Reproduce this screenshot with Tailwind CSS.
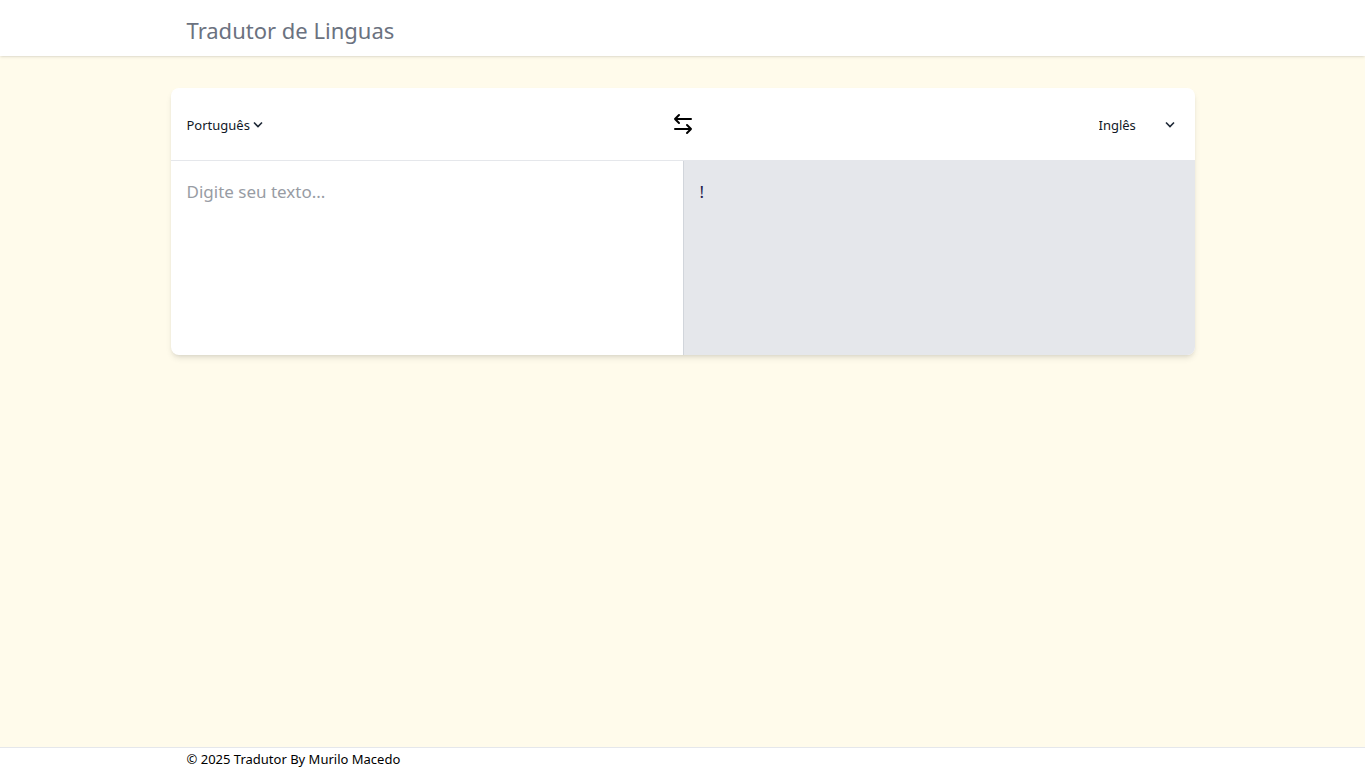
<!DOCTYPE html>
<html lang="pt-BR">
<head>
<meta charset="utf-8">
<meta name="viewport" content="width=device-width, initial-scale=1">
<title>Tradutor de Linguas</title>
<script src="https://cdn.jsdelivr.net/npm/@tailwindcss/browser@4"></script>
</head>
<body class="flex min-h-screen flex-col bg-[#fffbeb] font-['Noto_Sans',sans-serif] text-black">
<header class="bg-white shadow-sm">
  <div class="mx-auto flex h-14 w-full max-w-5xl items-center px-4 pt-1">
    <h1 class="text-[22px] leading-8 text-[#6b7280]">Tradutor de Linguas</h1>
  </div>
</header>
<main class="flex grow items-start py-8">
  <div class="mx-auto w-full max-w-5xl overflow-hidden rounded-lg bg-white shadow-md">
    <div class="flex items-center justify-between border-b border-[#e5e7eb] p-4">
      <div class="grid w-20 items-center">
        <select aria-label="Idioma de origem" class="col-start-1 row-start-1 w-full appearance-none bg-transparent pt-0.5 text-[13px] leading-5 text-[#111827]">
          <option>Português</option><option>Inglês</option><option>Espanhol</option>
        </select>
        <svg class="pointer-events-none col-start-1 row-start-1 mr-1 size-[10px] justify-self-end" viewBox="0 0 10 10" fill="none" stroke="#1f2937" stroke-width="1.6" aria-hidden="true"><path d="M1 3.500l4 4 4-4"/></svg>
      </div>
      <button type="button" aria-label="Trocar idiomas" class="rounded-full p-2">
        <svg class="size-6" viewBox="0 0 24 24" fill="none" stroke="#000" stroke-width="2" stroke-linecap="round" stroke-linejoin="round" aria-hidden="true"><path d="M8 3 4 7l4 4M4 7h16M16 13l4 4-4 4M20 17H4"/></svg>
      </button>
      <div class="grid w-20 items-center">
        <select aria-label="Idioma de destino" class="col-start-1 row-start-1 w-full appearance-none bg-transparent pt-0.5 text-[13px] leading-5 text-[#111827]">
          <option>Inglês</option><option>Português</option><option>Espanhol</option>
        </select>
        <svg class="pointer-events-none col-start-1 row-start-1 mr-1 size-[10px] justify-self-end" viewBox="0 0 10 10" fill="none" stroke="#1f2937" stroke-width="1.6" aria-hidden="true"><path d="M1 3.500l4 4 4-4"/></svg>
      </div>
    </div>
    <div class="grid grid-cols-2">
      <textarea aria-label="Texto original" placeholder="Digite seu texto..." class="block h-[194px] w-full resize-none p-4 text-[17px] leading-[30px] outline-none placeholder:text-[#989ca4]"></textarea>
      <div class="border-l border-[#d1d5db] bg-[#e5e7eb] p-4">
        <p class="text-[17px] leading-[30px] text-[#1e1b4b]">!</p>
      </div>
    </div>
  </div>
</main>
<footer class="border-t border-[#e5e7eb] bg-white">
  <div class="mx-auto h-[19px] w-full max-w-5xl px-4">
    <p class="text-[13px] leading-[22px]">© 2025 Tradutor By Murilo Macedo</p>
  </div>
</footer>
</body>
</html>
